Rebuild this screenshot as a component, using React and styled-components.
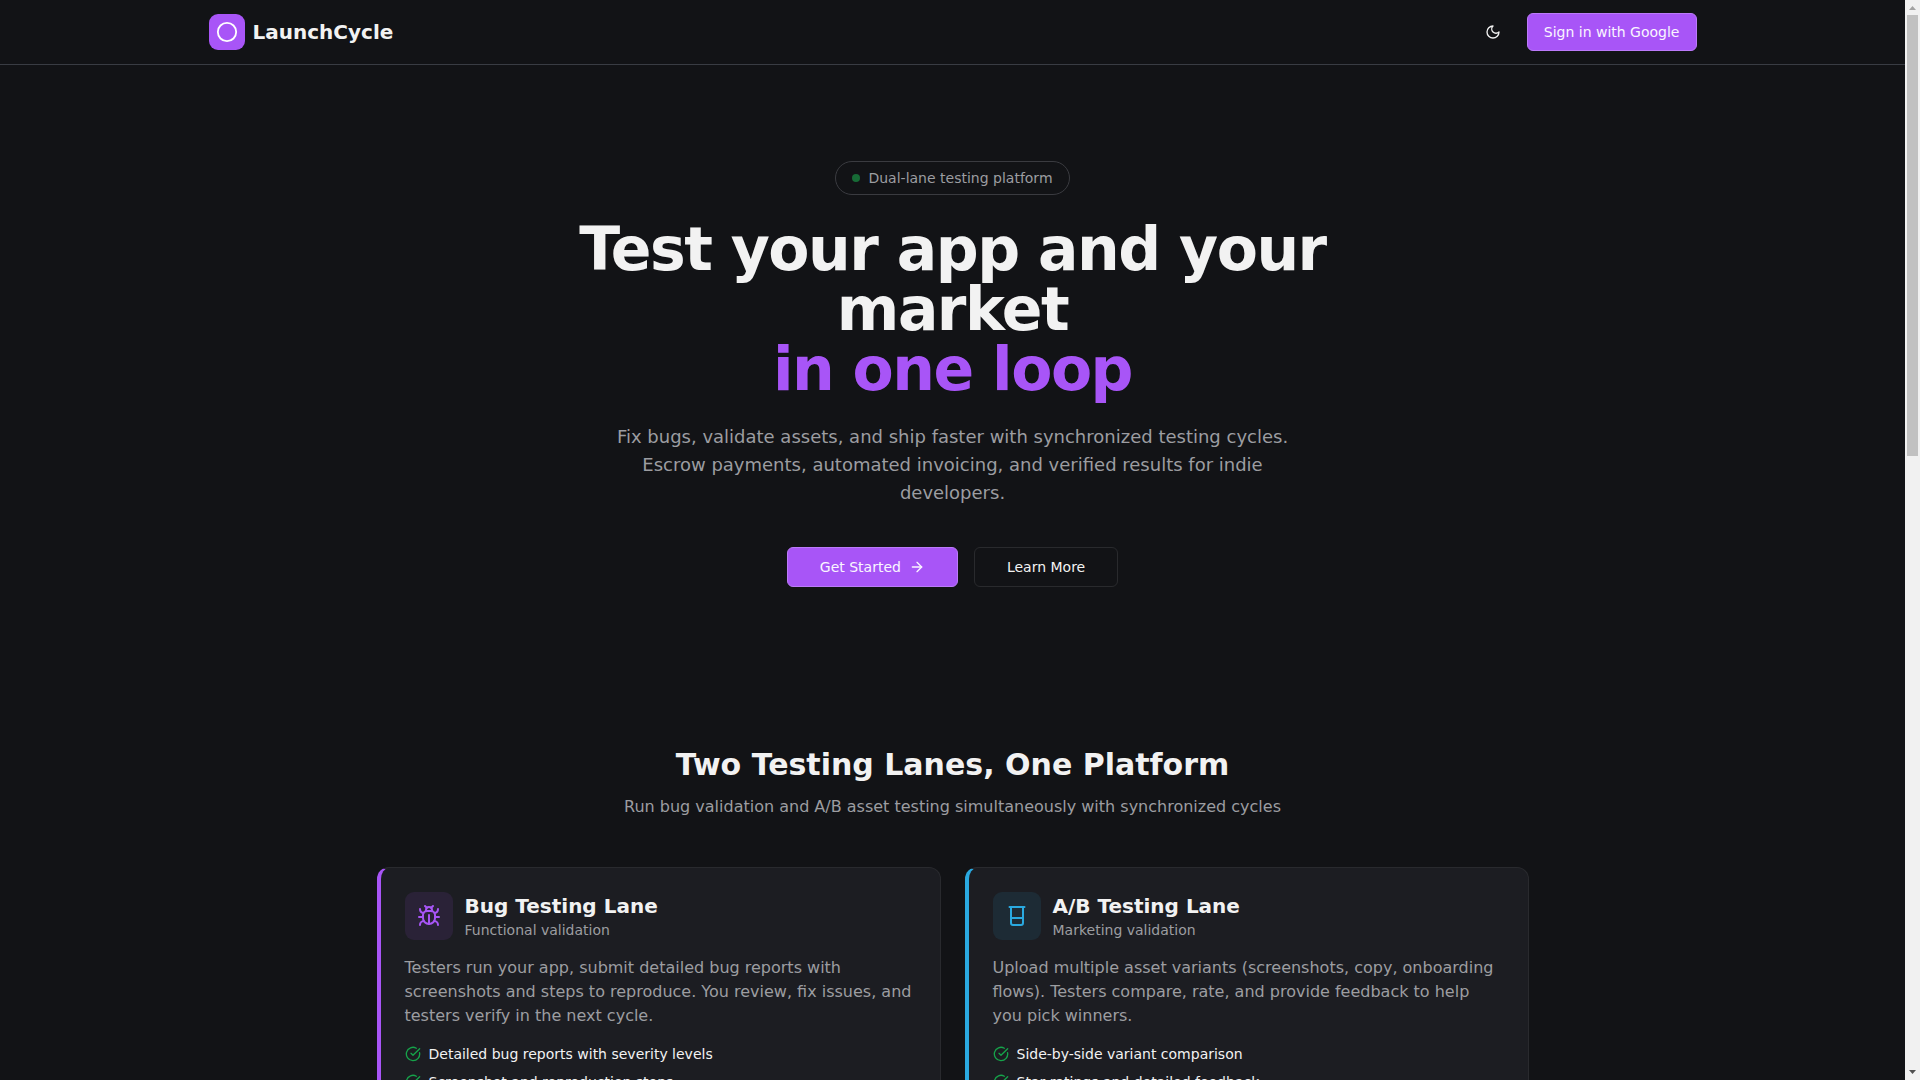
import React from 'react'
import styled, { createGlobalStyle } from 'styled-components'
import { ArrowRight, Beaker, Bug, Circle, CircleCheckBig } from 'lucide-react'


const GlobalStyle = createGlobalStyle`
    * {
        box-sizing: border-box;
    }
    body {
        margin: 0;
        background-color: #121316;
        color: #f2f2f2;
        font-family: "DejaVu Sans", sans-serif;
        font-size: 16px;
        line-height: 24px;
    }
    h1, h2, h3, p, ul {
        margin: 0;
        padding: 0;
    }
    button {
        font-family: inherit;
        cursor: pointer;
    }
`

const Window = styled.div`
    display: flex;
    height: 100vh;
    overflow: hidden;
`
const Page = styled.div`
    flex: 1;
    min-width: 0;
    overflow: hidden;
`

const Header = styled.header`
    border-bottom: 1px solid #393c43;
`
const HeaderInner = styled.div`
    display: flex;
    align-items: center;
    justify-content: space-between;
    max-width: 1536px;
    height: 64px;
    margin: 0 auto;
    padding: 0 24px;
`
const Brand = styled.a`
    display: flex;
    align-items: center;
    gap: 8px;
    color: inherit;
    text-decoration: none;
`
const BrandMark = styled.span`
    display: flex;
    align-items: center;
    justify-content: center;
    width: 36px;
    height: 36px;
    border-radius: 9px;
    background-color: #a855f7;
    color: #fff;
`
const BrandName = styled.span`
    font-size: 20px;
    line-height: 28px;
    font-weight: 600;
`
const HeaderActions = styled.div`
    display: flex;
    align-items: center;
    gap: 16px;
`
const IconButton = styled.button`
    display: flex;
    align-items: center;
    justify-content: center;
    width: 36px;
    height: 36px;
    padding: 0;
    border: none;
    border-radius: 6px;
    background-color: transparent;
    color: #f2f2f2;
`
const Button = styled.button`
    display: flex;
    align-items: center;
    justify-content: center;
    gap: 8px;
    min-height: ${props => props.$large ? '40px' : '38px'};
    padding: ${props => props.$large ? '0 32px' : '0 16px'};
    border: 1px solid ${props => props.$outline ? '#292a2d' : '#bb7af9'};
    border-radius: 6px;
    background-color: ${props => props.$outline ? 'transparent' : '#a855f7'};
    color: ${props => props.$outline ? '#f2f2f2' : '#faf5ff'};
    font-size: 14px;
    line-height: 20px;
    font-weight: 500;
    white-space: nowrap;
`

const Hero = styled.section`
    padding: 96px 24px;
`
const HeroInner = styled.div`
    display: flex;
    flex-direction: column;
    align-items: center;
    gap: 24px;
    max-width: 768px;
    margin: 0 auto;
    text-align: center;
`
const Badge = styled.div`
    display: flex;
    align-items: center;
    gap: 8px;
    padding: 6px 16px;
    border: 1px solid #3a3b40;
    border-radius: 17px;
    color: #9c9da1;
    font-size: 14px;
    line-height: 20px;
`
const BadgeDot = styled.span`
    width: 8px;
    height: 8px;
    border-radius: 50%;
    background-color: #176b36;
`
const HeroTitle = styled.h1`
    font-size: 60px;
    line-height: 60px;
    font-weight: 700;
    letter-spacing: -0.025em;
`
const Accent = styled.span`
    display: block;
    color: #a855f7;
`
const HeroText = styled.p`
    max-width: 672px;
    color: #9c9da1;
    font-size: 18px;
    line-height: 28px;
`
const HeroButtons = styled.div`
    display: flex;
    gap: 16px;
    margin-top: 16px;
`

const Lanes = styled.section`
    max-width: 1200px;
    margin: 0 auto;
    padding: 64px 24px;
`
const SectionHeading = styled.div`
    margin-bottom: 48px;
    text-align: center;
`
const SectionTitle = styled.h2`
    margin-bottom: 12px;
    font-size: 30px;
    line-height: 36px;
    font-weight: 700;
`
const Muted = styled.p`
    color: #9c9da1;
`
const LaneGrid = styled.div`
    display: grid;
    grid-template-columns: 1fr 1fr;
    gap: 24px;
`
const Card = styled.article`
    display: flex;
    flex-direction: column;
    gap: 16px;
    padding: 24px;
    border: 1px solid #292a2e;
    border-left: 4px solid ${props => props.$color};
    border-radius: 12px;
    background-color: #1c1d22;
`
const CardTop = styled.div`
    display: flex;
    align-items: center;
    gap: 12px;
`
const CardIcon = styled.div`
    display: flex;
    align-items: center;
    justify-content: center;
    width: 48px;
    height: 48px;
    border-radius: 9px;
    background-color: ${props => props.$tint};
    color: ${props => props.$color};
`
const CardTitle = styled.h3`
    font-size: 20px;
    line-height: 28px;
    font-weight: 600;
`
const CardSubtitle = styled.p`
    color: #9c9da1;
    font-size: 14px;
    line-height: 20px;
`
const CheckList = styled.ul`
    display: flex;
    flex-direction: column;
    gap: 8px;
    list-style: none;
`
const CheckItem = styled.li`
    display: flex;
    align-items: center;
    gap: 8px;
    font-size: 14px;
    line-height: 20px;

    svg {
        color: #16a34a;
    }
`

const ScrollTrack = styled.div`
    display: flex;
    flex-direction: column;
    align-items: center;
    width: 15px;
    background-color: #f1f1f1;
`
const ScrollArrow = styled.svg`
    flex: none;
    width: 15px;
    height: 15px;
    fill: ${props => props.$dim ? '#a3a3a3' : '#505050'};
`
const ScrollRail = styled.div`
    flex: 1;
    width: 11px;
`
const ScrollThumb = styled.div`
    height: 42%;
    background-color: #c1c1c1;
`


const lanes = [
    {
        title: 'Bug Testing Lane',
        subtitle: 'Functional validation',
        text: 'Testers run your app, submit detailed bug reports with screenshots and steps to reproduce. You review, fix issues, and testers verify in the next cycle.',
        points: ['Detailed bug reports with severity levels', 'Screenshot and reproduction steps'],
        icon: Bug,
        color: '#a855f7',
        tint: '#2a2237',
    },
    {
        title: 'A/B Testing Lane',
        subtitle: 'Marketing validation',
        text: 'Upload multiple asset variants (screenshots, copy, onboarding flows). Testers compare, rate, and provide feedback to help you pick winners.',
        points: ['Side-by-side variant comparison', 'Star ratings and detailed feedback'],
        icon: Beaker,
        color: '#2aa9e0',
        tint: '#1d2b35',
    },
]

const MoonIcon = () => (
    <svg width="16" height="16" viewBox="0 0 24 24" fill="none" stroke="currentColor" strokeWidth="2" strokeLinecap="round" strokeLinejoin="round">
        <path d="M12 3a6 6 0 0 0 9 9 9 9 0 1 1-9-9Z" />
    </svg>
)

const Lane = ({ lane }) => {
  const Icon = lane.icon
  return (
    <Card $color={lane.color}>
        <CardTop>
            <CardIcon $color={lane.color} $tint={lane.tint}><Icon size={24} /></CardIcon>
            <div>
                <CardTitle>{lane.title}</CardTitle>
                <CardSubtitle>{lane.subtitle}</CardSubtitle>
            </div>
        </CardTop>
        <Muted>{lane.text}</Muted>
        <CheckList>
            {lane.points.map(point => (
                <CheckItem key={point}>
                    <CircleCheckBig size={16} />
                    <span>{point}</span>
                </CheckItem>
            ))}
        </CheckList>
    </Card>
  )
}

const App = () => {
  return (
    <Window>
        <GlobalStyle />
        <Page>
            <Header>
                <HeaderInner>
                    <Brand href="#">
                        <BrandMark><Circle size={22} /></BrandMark>
                        <BrandName>LaunchCycle</BrandName>
                    </Brand>
                    <HeaderActions>
                        <IconButton aria-label="Toggle theme"><MoonIcon /></IconButton>
                        <Button>Sign in with Google</Button>
                    </HeaderActions>
                </HeaderInner>
            </Header>
            <main>
                <Hero>
                    <HeroInner>
                        <Badge><BadgeDot />Dual-lane testing platform</Badge>
                        <HeroTitle>
                            Test your app and your market
                            <Accent>in one loop</Accent>
                        </HeroTitle>
                        <HeroText>
                            Fix bugs, validate assets, and ship faster with synchronized testing cycles.
                            Escrow payments, automated invoicing, and verified results for indie developers.
                        </HeroText>
                        <HeroButtons>
                            <Button $large>Get Started<ArrowRight size={16} /></Button>
                            <Button $large $outline>Learn More</Button>
                        </HeroButtons>
                    </HeroInner>
                </Hero>
                <Lanes>
                    <SectionHeading>
                        <SectionTitle>Two Testing Lanes, One Platform</SectionTitle>
                        <Muted>Run bug validation and A/B asset testing simultaneously with synchronized cycles</Muted>
                    </SectionHeading>
                    <LaneGrid>
                        {lanes.map(lane => <Lane key={lane.title} lane={lane} />)}
                    </LaneGrid>
                </Lanes>
            </main>
        </Page>
        <ScrollTrack aria-hidden="true">
            <ScrollArrow $dim viewBox="0 0 15 15"><path d="M4 10h7L7.500 6z" /></ScrollArrow>
            <ScrollRail><ScrollThumb /></ScrollRail>
            <ScrollArrow viewBox="0 0 15 15"><path d="M4 5h7L7.500 9z" /></ScrollArrow>
        </ScrollTrack>
    </Window>
  )
}

export default App
